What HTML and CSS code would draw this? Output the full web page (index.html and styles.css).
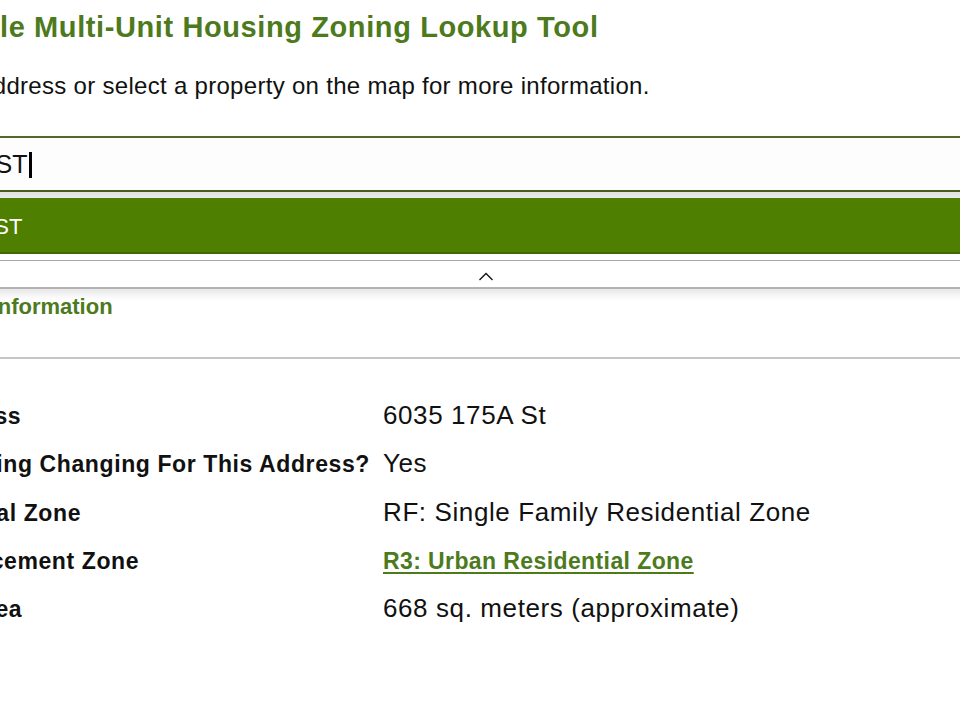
FILE: index.html
```html
<!DOCTYPE html>
<html lang="en">
<head>
<meta charset="utf-8">
<title>Small-Scale Multi-Unit Housing Zoning Lookup Tool</title>
<link rel="stylesheet" href="styles.css">
</head>
<body>
<div class="page">
  <h1 class="title">Small-Scale Multi-Unit Housing Zoning Lookup Tool</h1>
  <p class="intro">Enter an address or select a property on the map for more information.</p>

  <div class="search">
    <div class="search-input"><span class="typed">6035 175A ST</span><span class="caret"></span></div>
    <div class="suggestions">
      <div class="option">6035 175A ST</div>
      <div class="collapse">
        <svg class="chev" width="16" height="9" viewBox="0 0 16 9" aria-hidden="true"><path d="M1.5 8 L8 1.5 L14.5 8" fill="none" stroke="#111" stroke-width="1.3"/></svg>
      </div>
    </div>
  </div>

  <div class="section-head">
    <h2 class="section-title">Property Information</h2>
  </div>

  <dl class="info">
    <div class="row"><dt>Address</dt><dd>6035 175A St</dd></div>
    <div class="row"><dt>Is Zoning Changing For This Address?</dt><dd>Yes</dd></div>
    <div class="row"><dt>Original Zone</dt><dd>RF: Single Family Residential Zone</dd></div>
    <div class="row"><dt>Replacement Zone</dt><dd><a class="zone-link" href="#">R3: Urban Residential Zone</a></dd></div>
    <div class="row"><dt>Lot Area</dt><dd>668 sq. meters (approximate)</dd></div>
  </dl>
</div>
</body>
</html>
```
FILE: styles.css
```css
html, body {
  margin: 0;
  padding: 0;
  background: #ffffff;
  overflow: hidden;
}

body {
  font-family: "Liberation Sans", Arial, sans-serif;
  color: #111111;
}

.page {
  margin-left: -141px;
  width: 1254px;
}

.title {
  margin: 0 0 0 -3px;
  padding-top: 9px;
  font-size: 29px;
  line-height: 36px;
  font-weight: 700;
  letter-spacing: 0.6px;
  color: #4c7a1c;
}

.intro {
  margin: 26px 0 0;
  padding-left: 20px;
  font-size: 24px;
  line-height: 30px;
  letter-spacing: 0.3px;
  color: #111111;
}

.search {
  margin-top: 35px;
}

.search-input {
  display: flex;
  align-items: center;
  height: 52px;
  padding-left: 10px;
  border-top: 2px solid #52672a;
  border-bottom: 2px solid #4a5d20;
  background: #fdfdfd;
  font-size: 25px;
  line-height: 52px;
  color: #111111;
}

.caret {
  display: inline-block;
  width: 3px;
  height: 26px;
  margin-left: 2px;
  margin-top: 2px;
  background: #000000;
}

.suggestions {
  padding-top: 6px;
  background: linear-gradient(#dfe3e1 0, #e9ecea 6px, #ffffff 6px);
  box-shadow: 0 5px 8px rgba(0, 0, 0, 0.10);
}

.option {
  height: 50px;
  padding-top: 4px;
  padding-left: 24px;
  border-bottom: 2px solid #3f6a00;
  background: #4f7f00;
  color: #ffffff;
  font-size: 22px;
  line-height: 50px;
}

.collapse {
  display: flex;
  justify-content: center;
  align-items: center;
  height: 26px;
  margin-top: 6px;
  border-top: 1px solid #a8a8a8;
  border-bottom: 2px solid #b3b3b3;
  background: #ffffff;
}

.chev {
  display: block;
  margin-top: 4px;
}

.section-head {
  margin-top: 4px;
  padding-left: 36px;
  padding-bottom: 36px;
  border-bottom: 2px solid #c6c6c6;
}

.section-title {
  margin: 0;
  font-size: 22px;
  line-height: 28px;
  font-weight: 700;
  color: #4c7a1c;
}

.info {
  margin: 32px 0 0;
  padding-left: 66px;
}

.row {
  display: grid;
  grid-template-columns: 458px 1fr;
  align-items: baseline;
  height: 48.3px;
  line-height: 48.3px;
}

.row dt {
  font-size: 23px;
  line-height: 48.3px;
  font-weight: 700;
  letter-spacing: 0.6px;
  white-space: nowrap;
}

.row dd {
  margin: 0;
  font-size: 26px;
  line-height: 48.3px;
  letter-spacing: 0.6px;
  white-space: nowrap;
}

.zone-link {
  font-size: 23px;
  font-weight: 700;
  letter-spacing: 0.4px;
  color: #4c7a1c;
  text-decoration: underline;
  text-underline-offset: 3px;
}
```
